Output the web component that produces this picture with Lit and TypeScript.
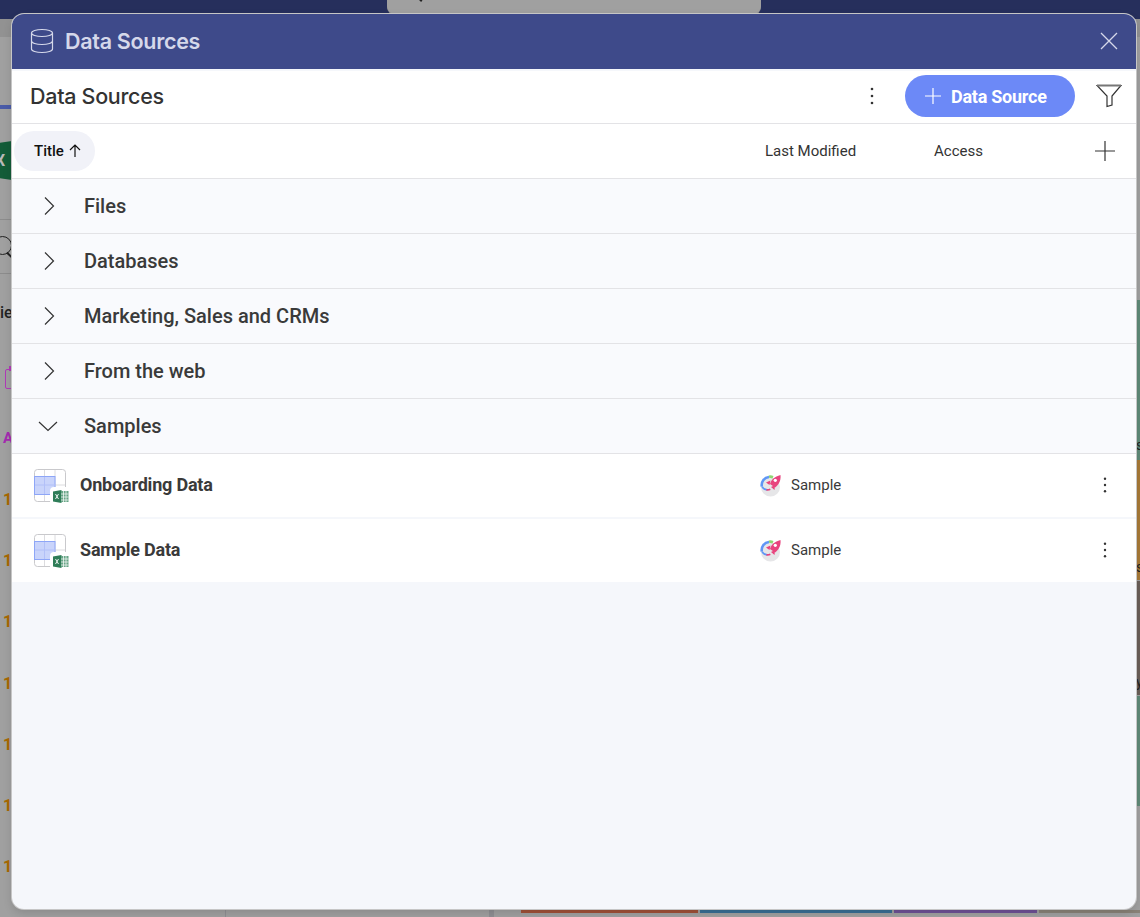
import { LitElement, html, css, svg } from 'lit';
import { customElement } from 'lit/decorators.js';

const GROUPS = [
  { label: 'Files', open: false },
  { label: 'Databases', open: false },
  { label: 'Marketing, Sales and CRMs', open: false },
  { label: 'From the web', open: false },
  { label: 'Samples', open: true },
];

const ITEMS = ['Onboarding Data', 'Sample Data'];

const ORANGE_TOPS = [490, 551, 612, 674, 735, 796, 857];

const kebab = html`<svg width="4" height="20" viewBox="0 0 4 20">
  <circle cx="2" cy="3" r="1.300"></circle>
  <circle cx="2" cy="10" r="1.300"></circle>
  <circle cx="2" cy="17" r="1.300"></circle>
</svg>`;

const smallKebab = html`<svg width="4" height="20" viewBox="0 0 4 20">
  <circle cx="2" cy="3.700" r="1.200"></circle>
  <circle cx="2" cy="10" r="1.200"></circle>
  <circle cx="2" cy="16.300" r="1.200"></circle>
</svg>`;

const tableIcon = html`<svg width="38" height="36" viewBox="0 0 38 36" fill="none">
  <rect x="1.500" y="0.500" width="31" height="32" rx="3" fill="#fff" stroke="#c9c9cc"></rect>
  <path d="M11.500 1v31M22 1v31M2 16h30M2 25h30" stroke="#dcdcdf"></path>
  <rect x="1.500" y="7.500" width="20.500" height="18" fill="#c9d4fb" stroke="#8ea6f7"></rect>
  <path d="M11.500 8v17M2 16h20" stroke="#b2c0f8"></path>
  <rect x="17" y="18" width="21" height="18" rx="4" fill="#fff"></rect>
  <path d="M20 22.500l8.500-1.500v13L20 32.500z" fill="#2f7d58"></path>
  <rect x="28" y="22" width="7.500" height="11" fill="#67a586"></rect>
  <path d="M30.500 22v11M33 22v11M28 25h7.500M28 28h7.500M28 31h7.500" stroke="#fff" stroke-width="0.700"></path>
  <path d="M22.500 25l3 5M25.500 25l-3 5" stroke="#fff" stroke-width="0.900"></path>
</svg>`;

const rocketIcon = html`<svg width="24" height="24" viewBox="0 0 24 24" fill="none">
  <circle cx="11.500" cy="14" r="9.500" fill="#e6e6e8"></circle>
  <path d="M2.800 13.500C2 8.500 5.500 4.300 10 4" stroke="#5f96f5" stroke-width="2.600"></path>
  <path d="M10 3.800c1.500-.3 2.800-.1 4 .4" stroke="#8fd672" stroke-width="2.600"></path>
  <path d="M3 13.500c1 2.200 3 3.300 5.200 3.400" stroke="#5f96f5" stroke-width="1.800"></path>
  <path d="M7.500 16.800c1.500.3 2.800 0 3.800-.5" stroke="#e8447e" stroke-width="1.800"></path>
  <path d="M11 11c1-4 4.500-7.500 10.500-9 .6 6-2 10-5.500 12.500z" fill="#e8447e"></path>
  <path d="M11.500 7.500L7 9.500l3.500 2.500zM16 12l-.5 5-3.500-3z" fill="#e8447e"></path>
  <circle cx="16.300" cy="7.300" r="1.600" fill="#fff"></circle>
</svg>`;

const chevron = (open: boolean) =>
  open
    ? svg`<path d="M1 6l9 8.500L19 6" fill="none" stroke="#333" stroke-width="1.200"></path>`
    : svg`<path d="M7 1.500l8.500 8.500L7 18.500" fill="none" stroke="#333" stroke-width="1.200"></path>`;

@customElement('app-root')
export class AppRoot extends LitElement {
  static styles = css`
    :host {
      display: block;
      position: relative;
      width: 1140px;
      height: 917px;
      overflow: hidden;
      background: #a0a0a0;
      font-family: Roboto, 'Liberation Sans', sans-serif;
    }

    /* dimmed app behind the dialog */
    .backdrop div,
    .backdrop span {
      position: absolute;
    }
    .top-bar { left: 0; top: 0; width: 1140px; height: 19px; background: #262f5c; }
    .search-box {
      left: 387px; top: 0; width: 374px; height: 14px;
      background: #a0a0a0; border-radius: 0 0 8px 8px;
      box-shadow: 0 1px 0 #8f8f8f;
    }
    .search-cursor { left: 419px; top: -3px; width: 2px; height: 5px; background: #222; transform: rotate(-45deg); }
    .sub-bar { left: 0; top: 19px; width: 12px; height: 18px; background: #929292; }
    .sub-bar.right { left: 1136px; width: 4px; }
    .blue-line { left: 0; top: 105px; width: 12px; height: 4px; background: #4a5ba8; }
    .excel {
      left: -8px; top: 141px; width: 20px; height: 39px; background: #135c38;
      clip-path: polygon(0 8%, 100% 0, 100% 100%, 0 92%);
    }
    .excel-x { left: -5px; top: 151px; color: #b9b9b9; font-size: 16px; font-weight: 700; }
    .rule { left: 0; width: 12px; height: 1px; background: #8c8c8c; }
    .search-ring {
      left: -7px; top: 236px; width: 17px; height: 17px;
      border: 1.500px solid #222; border-radius: 50%;
    }
    .search-tail { left: 6px; top: 254px; width: 7px; height: 1.500px; background: #222; transform: rotate(45deg); }
    .cut-text { left: 0; top: 303px; font-size: 16px; font-weight: 500; color: #222; }
    .calendar {
      left: 5px; top: 369px; width: 12px; height: 18px;
      border: 1.500px solid #b03ab8; border-radius: 2px;
    }
    .calendar-tab { left: 9px; top: 366px; width: 1.500px; height: 5px; background: #b03ab8; }
    .letter-a { left: 3px; top: 429px; font-size: 15px; font-weight: 700; color: #a52bb0; }
    .orange { left: 3px; font-size: 16px; font-weight: 700; color: #a86800; }
    .strip { left: 1137px; width: 3px; }
    .strip-text { left: 1136px; font-size: 14px; color: #222; }
    .bar { top: 910px; height: 3px; }
    .v-line { top: 909px; height: 8px; background: #8f8f93; }

    .dialog {
      position: absolute;
      left: 12px;
      top: 14px;
      width: 1124px;
      height: 895px;
      display: flex;
      flex-direction: column;
      background: #f5f7fb;
      border-radius: 12px;
      overflow: hidden;
      box-shadow: 0 0 0 1px #c6c6c6, 0 4px 10px rgba(0, 0, 0, 0.14);
    }

    .title-bar {
      flex: none;
      height: 54px;
      padding: 0 18px 1px 18px;
      display: flex;
      align-items: center;
      gap: 12px;
      background: #3e4a8a;
      color: #d5d8ea;
    }
    .title-bar svg { display: block; }
    .title-text {
      flex: 1;
      font-family: Inter, sans-serif;
      font-size: 21.500px;
      font-weight: 600;
      letter-spacing: -0.300px;
      margin-left: -1px;
    }
    .close { margin-right: -1px; }

    .toolbar {
      flex: none;
      height: 50px;
      margin-top: 2px;
      display: flex;
      align-items: center;
      padding: 0 14px 2px 18px;
      background: #fff;
      border-bottom: 1px solid #e3e3e6;
    }
    .toolbar-title {
      flex: 1;
      font-family: Inter, sans-serif;
      font-size: 21.500px;
      font-weight: 500;
      letter-spacing: -0.300px;
      color: #333;
    }
    .kebab { display: flex; fill: #333; }
    .add-btn {
      width: 170px;
      height: 42px;
      margin: 0 21px 0 31px;
      display: flex;
      align-items: center;
      gap: 9px;
      padding-left: 19px;
      box-sizing: border-box;
      border-radius: 21px;
      background: #6c89f7;
      color: #fff;
      font-size: 18px;
      font-weight: 700;
      letter-spacing: -0.250px;
    }

    .columns {
      flex: none;
      height: 54px;
      display: flex;
      align-items: center;
      background: #fff;
      border-bottom: 1px solid #e3e3e6;
      font-size: 15px;
      color: #333;
    }
    .sort-pill {
      margin-left: 2px;
      width: 81px;
      height: 40px;
      display: flex;
      align-items: center;
      gap: 4px;
      padding-left: 20px;
      box-sizing: border-box;
      border-radius: 20px;
      background: #f1f2f8;
      color: #111;
      font-weight: 500;
    }
    .col-modified { margin-left: 670px; width: 169px; }
    .col-access { width: 160px; }

    .group {
      flex: none;
      height: 54px;
      display: flex;
      align-items: center;
      background: #f9fafd;
      border-bottom: 1px solid #e3e3e6;
      font-size: 20px;
      font-weight: 500;
      color: #3a3a3a;
    }
    .chevron { width: 72px; padding-left: 26px; box-sizing: border-box; display: flex; }

    .item {
      flex: none;
      height: 63px;
      padding-bottom: 1px;
      box-sizing: border-box;
      display: flex;
      align-items: center;
      background: #fff;
      margin-bottom: 2px;
      color: #3a3a3a;
    }
    .item:last-child { margin-bottom: 0; }
    .item-icon { width: 68px; padding-left: 21px; margin-top: 4px; box-sizing: border-box; display: flex; }
    .item-name { width: 679px; margin-top: -2px; font-size: 18px; font-weight: 700; letter-spacing: -0.200px; }
    .item-owner { width: 344px; display: flex; align-items: center; gap: 8px; font-size: 15px; }
    .item-owner svg { display: block; }
  `;

  render() {
    return html`
      <div class="backdrop">
        <div class="top-bar"></div>
        <div class="search-box"></div>
        <div class="search-cursor"></div>
        <div class="sub-bar"></div>
        <div class="sub-bar right"></div>
        <div class="blue-line"></div>
        <div class="excel"></div>
        <span class="excel-x">X</span>
        <div class="rule" style="top:219px"></div>
        <div class="rule" style="top:273px"></div>
        <div class="search-ring"></div>
        <div class="search-tail"></div>
        <span class="cut-text">ie</span>
        <div class="calendar"></div>
        <div class="calendar-tab"></div>
        <span class="letter-a">A</span>
        ${ORANGE_TOPS.map((top) => html`<span class="orange" style="top:${top}px">1</span>`)}
        <div class="strip" style="top:300px;height:160px;background:#5f8a78"></div>
        <div class="strip" style="top:460px;height:120px;background:#a87a37"></div>
        <div class="strip" style="top:581px;height:114px;background:#6b5f58"></div>
        <div class="strip" style="top:696px;height:110px;background:#5f8a78"></div>
        <span class="strip-text" style="top:437px">s</span>
        <span class="strip-text" style="top:559px">s</span>
        <span class="strip-text" style="top:674px">y</span>
        <div class="v-line" style="left:225px;width:1px"></div>
        <div class="v-line" style="left:489px;width:5px"></div>
        <div class="bar" style="left:521px;width:177px;background:#a05138"></div>
        <div class="bar" style="left:700px;width:192px;background:#3a6f95"></div>
        <div class="bar" style="left:894px;width:143px;background:#6f5296"></div>
        <div class="bar" style="left:1039px;width:101px;background:#8a8378"></div>
      </div>

      <div class="dialog">
        <div class="title-bar">
          <svg width="24" height="26" viewBox="0 0 24 26" fill="none" stroke="#d5d8ea" stroke-width="1.200">
            <ellipse cx="12" cy="5" rx="10.500" ry="3.500"></ellipse>
            <path d="M1.500 5v16c0 2 4.700 3.500 10.500 3.500S22.500 23 22.500 21V5"></path>
            <path d="M1.500 13c0 2 4.700 3.500 10.500 3.500S22.500 15 22.500 13"></path>
          </svg>
          <span class="title-text">Data Sources</span>
          <svg class="close" width="20" height="20" viewBox="0 0 20 20" stroke="#d5d8ea" stroke-width="1.300">
            <path d="M2 2l16 16M18 2L2 18"></path>
          </svg>
        </div>

        <div class="toolbar">
          <span class="toolbar-title">Data Sources</span>
          <span class="kebab">${kebab}</span>
          <div class="add-btn">
            <svg width="18" height="18" viewBox="0 0 18 18" stroke="#fff" stroke-width="1.200">
              <path d="M9 1v16M1 9h16"></path>
            </svg>
            Data Source
          </div>
          <svg width="26" height="24" viewBox="0 0 26 24" fill="none" stroke="#333" stroke-width="1.200">
            <path d="M1 1.500h24L16 12v9l-5 1.500V12z"></path>
            <path d="M1 1.500h24" stroke="#777" stroke-width="2"></path>
          </svg>
        </div>

        <div class="columns">
          <div class="sort-pill">
            Title
            <svg width="14" height="14" viewBox="0 0 14 14" fill="none" stroke="#111" stroke-width="1.200">
              <path d="M7 13V1M2 6l5-5 5 5"></path>
            </svg>
          </div>
          <span class="col-modified">Last Modified</span>
          <span class="col-access">Access</span>
          <svg width="22" height="22" viewBox="0 0 22 22" stroke="#333" stroke-width="1.200">
            <path d="M11 1v20M1 11h20"></path>
          </svg>
        </div>

        ${GROUPS.map(
          (g) => html`
            <div class="group">
              <span class="chevron">
                <svg width="20" height="20" viewBox="0 0 20 20">${chevron(g.open)}</svg>
              </span>
              ${g.label}
            </div>
          `
        )}
        ${ITEMS.map(
          (name) => html`
            <div class="item">
              <span class="item-icon">${tableIcon}</span>
              <span class="item-name">${name}</span>
              <span class="item-owner">${rocketIcon} Sample</span>
              <span class="kebab">${smallKebab}</span>
            </div>
          `
        )}
      </div>
    `;
  }
}
